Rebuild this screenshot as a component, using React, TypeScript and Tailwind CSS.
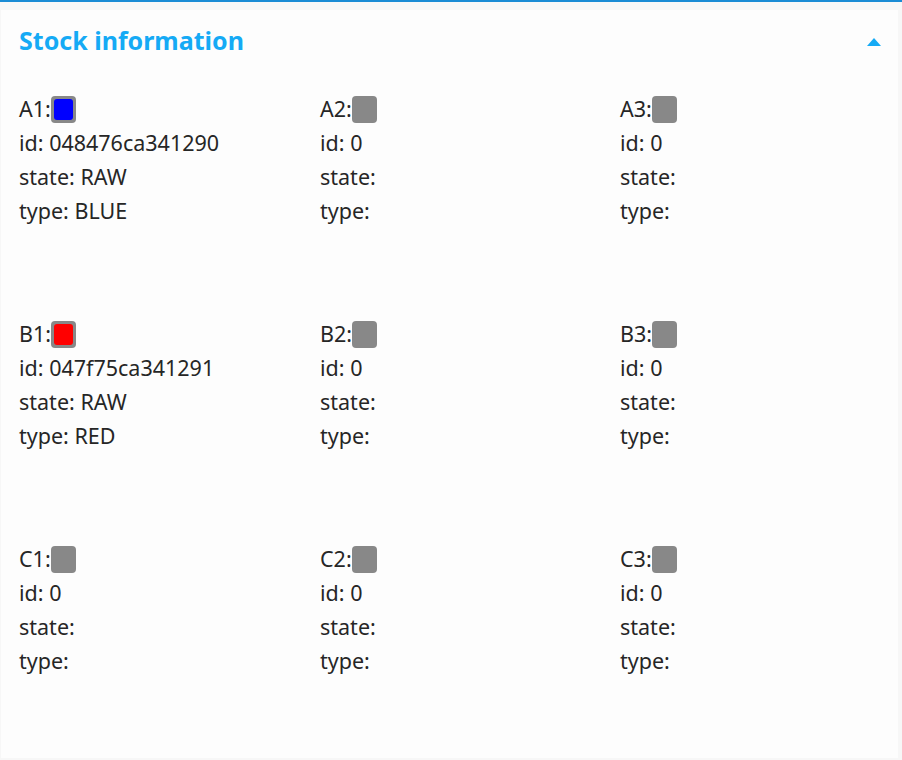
const slots = [
  { name: "A1", id: "048476ca341290", state: "RAW", type: "BLUE", color: "bg-[#0000ff]" },
  { name: "A2", id: "0", state: "", type: "", color: "" },
  { name: "A3", id: "0", state: "", type: "", color: "" },
  { name: "B1", id: "047f75ca341291", state: "RAW", type: "RED", color: "bg-[#ff0000]" },
  { name: "B2", id: "0", state: "", type: "", color: "" },
  { name: "B3", id: "0", state: "", type: "", color: "" },
  { name: "C1", id: "0", state: "", type: "", color: "" },
  { name: "C2", id: "0", state: "", type: "", color: "" },
  { name: "C3", id: "0", state: "", type: "", color: "" },
];

function Swatch({ color }: { color: string }) {
  return (
    <span className="inline-flex w-[25px] h-[27px] rounded-[4px] bg-[#888888] p-[3px]">
      {color && <span className={`flex-1 rounded-[3px] ${color}`} />}
    </span>
  );
}

export default function App() {
  return (
    <div
      className="w-[902px] h-[760px] bg-[#f7f7f7] border-t-2 border-[#1a8bd4] overflow-hidden"
      style={{ fontFamily: '"Noto Sans", sans-serif' }}
    >
      <section className="mt-2 ml-px w-[897px] h-[748px] bg-[#fdfdfd]">
        {/* header */}
        <div className="flex items-center justify-between pl-[18px] pr-[17px] pt-[13px] h-[46px]">
          <h2 className="text-[25px] font-bold text-[#15aaf5] leading-8">Stock information</h2>
          <span className="mt-1 w-0 h-0 border-x-[7px] border-x-transparent border-b-[8px] border-b-[#15aaf5]" />
        </div>

        {/* slots */}
        <div className="grid grid-cols-[301px_300px_1fr] pl-[18px] pt-[36px]">
          {slots.map((s) => (
            <div key={s.name} className="h-[225px] text-[21.5px] leading-[34px] text-[#262626]">
              <div className="flex items-center">
                {s.name}:<Swatch color={s.color} />
              </div>
              <div>id: {s.id}</div>
              <div>state: {s.state}</div>
              <div>type: {s.type}</div>
            </div>
          ))}
        </div>
      </section>
    </div>
  );
}
